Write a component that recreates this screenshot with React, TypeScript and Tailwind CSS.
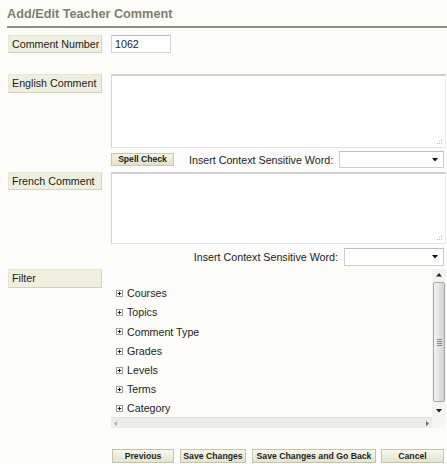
import React from "react";

function Label({ text, h = 18 }: { text: string; h?: number }) {
  return (
    <div className="w-[111px] shrink-0 pl-[8px]">
      <div
        className={`w-[94px] ${h === 19 ? "h-[19px]" : "h-[18px]"} bg-[#efefdf] border border-[#e6e6d4] border-b-[#d2d2bc] border-r-[#d6d6c0] flex items-center pl-[3px] text-[10.7px] leading-none text-[#1c1c1c]`}
      >
        {text}
      </div>
    </div>
  );
}

function Grip() {
  return (
    <svg width="6" height="6" viewBox="0 0 6 6" className="absolute right-[2px] bottom-[2px]">
      <rect x="4" y="0" width="1" height="1" fill="#b5b5b5" />
      <rect x="2" y="2" width="1" height="1" fill="#b5b5b5" />
      <rect x="4" y="2" width="1" height="1" fill="#b5b5b5" />
      <rect x="0" y="4" width="1" height="1" fill="#b5b5b5" />
      <rect x="2" y="4" width="1" height="1" fill="#b5b5b5" />
      <rect x="4" y="4" width="1" height="1" fill="#b5b5b5" />
    </svg>
  );
}

function TextArea({ tall }: { tall: boolean }) {
  return (
    <div
      className={`relative flex-1 mr-[1px] ${tall ? "h-[74px]" : "h-[72px]"} bg-white border-t-2 border-l border-r border-b border-t-[#cfcfcf] border-l-[#d6d6d6] border-r-[#ececec] border-b-[#e6e6e6]`}
    >
      <Grip />
    </div>
  );
}

function Select({ wide }: { wide: boolean }) {
  return (
    <div
      className={`${wide ? "w-[105px] h-[17px]" : "w-[100px] h-[18px]"} mr-[3px] bg-white border border-[#cdcdcd] border-t-[#bdbdbd] flex items-center justify-end pr-[5px]`}
    >
      <svg width="6" height="4" viewBox="0 0 6 4">
        <path d="M0 0 H6 L3 3.5 Z" fill="#111" />
      </svg>
    </div>
  );
}

function Btn({ text, w }: { text: string; w: string }) {
  return (
    <div
      className={`${w} h-[14px] flex items-center justify-center bg-gradient-to-b from-[#f7f7ee] to-[#e3e3cf] border border-[#c4c4ad] text-[8.7px] font-bold text-[#1e1e1e] leading-none`}
    >
      {text}
    </div>
  );
}

function Plus() {
  return (
    <svg width="7" height="7" viewBox="0 0 7 7" className="shrink-0">
      <rect x="0.5" y="0.5" width="6" height="6" fill="#fff" stroke="#9c9c9c" />
      <path d="M1.8 3.5 H5.2 M3.5 1.8 V5.2" stroke="#1a1a1a" strokeWidth="1" />
    </svg>
  );
}

export default function App() {
  const items = ["Courses", "Topics", "Comment Type", "Grades", "Levels", "Terms", "Category"];
  return (
    <div className="w-[447px] h-[464px] overflow-hidden bg-[#fcfcfa] font-['Liberation_Sans',Arial,sans-serif] text-[#1c1c1c]">
      <div className="pl-[7px] pt-[7px] h-[26px] text-[12.7px] leading-[15px] font-bold text-[#7e7f6a]">
        Add/Edit Teacher Comment
      </div>
      <div className="ml-[7px] h-[2px] bg-[#8b8e78]" />

      {/* Comment number */}
      <div className="flex mt-[7px] h-[18px]">
        <Label text="Comment Number" />
        <div className="w-[60px] h-[18px] bg-white border border-[#d4d4d4] border-t-[#bcbcbc] flex items-center pl-[3px] text-[10.7px] leading-none">
          1062
        </div>
      </div>

      {/* English */}
      <div className="flex mt-[21px]">
        <Label text="English Comment" h={19} />
        <TextArea tall />
      </div>

      <div className="flex mt-[3px] h-[17px] items-center">
        <div className="w-[111px] shrink-0" />
        <div className="w-[63px] h-[13px] flex items-center justify-center bg-gradient-to-b from-[#f3f3e4] to-[#e2e2c9] border border-[#c8c8b0] text-[8.6px] font-bold leading-none">
          Spell Check
        </div>
        <div className="ml-[15px] text-[10.7px] leading-none pt-[2px]">Insert Context Sensitive Word:</div>
        <div className="ml-auto">
          <Select wide />
        </div>
      </div>

      {/* French */}
      <div className="flex mt-[4px]">
        <Label text="French Comment" />
        <TextArea tall={false} />
      </div>

      <div className="flex mt-[3px] h-[19px] items-center justify-end">
        <div className="text-[10.7px] leading-none pt-[1px] mr-[6px]">Insert Context Sensitive Word:</div>
        <Select wide={false} />
      </div>

      {/* Filter */}
      <div className="flex mt-[3px]">
        <Label text="Filter" h={19} />
        <div className="flex-1 mr-[1px] h-[159px] flex flex-col bg-[#fcfcf9]">
          <div className="flex flex-1 min-h-0">
            <div className="flex-1 pt-[15px]">
              {items.map((it) => (
                <div key={it} className="flex items-center h-[19.2px] pl-[5px] text-[10.7px] leading-none">
                  <Plus />
                  <span className="ml-[4px]">{it}</span>
                </div>
              ))}
            </div>
            <div className="w-[14px] flex flex-col items-center bg-[#f3f3f1] pt-[4px] pb-[4px]">
              <svg width="6" height="4" viewBox="0 0 6 4" className="shrink-0">
                <path d="M0 3.5 H6 L3 0 Z" fill="#222" />
              </svg>
              <div className="mt-[5px] w-[12px] h-[120px] rounded-[2px] border border-[#a9a9a9] bg-gradient-to-r from-[#f2f2f2] via-[#e4e4e4] to-[#d2d2d2] flex flex-col items-center justify-center gap-[1px]">
                <div className="w-[5px] h-[1px] bg-[#8a8a8a]" />
                <div className="w-[5px] h-[1px] bg-[#8a8a8a]" />
                <div className="w-[5px] h-[1px] bg-[#8a8a8a]" />
                <div className="w-[5px] h-[1px] bg-[#8a8a8a]" />
              </div>
              <div className="flex-1" />
              <svg width="6" height="4" viewBox="0 0 6 4" className="shrink-0">
                <path d="M0 0 H6 L3 3.5 Z" fill="#222" />
              </svg>
            </div>
          </div>
          <div className="flex h-[11px]">
            <div className="flex-1 flex items-center justify-between px-[3px] bg-[#ececea] border-t border-[#e2e2e0]">
              <svg width="3" height="5" viewBox="0 0 3 5">
                <path d="M3 0 V5 L0 2.5 Z" fill="#b0b0b0" />
              </svg>
              <svg width="3" height="5" viewBox="0 0 3 5">
                <path d="M0 0 V5 L3 2.5 Z" fill="#6a6a6a" />
              </svg>
            </div>
            <div className="w-[14px] bg-[#f6f6f4]" />
          </div>
        </div>
      </div>

      {/* Buttons */}
      <div className="flex mt-[21px] pl-[112px]">
        <Btn text="Previous" w="w-[62px]" />
        <div className="ml-[6px]">
          <Btn text="Save Changes" w="w-[66px]" />
        </div>
        <div className="ml-[6px]">
          <Btn text="Save Changes and Go Back" w="w-[124px]" />
        </div>
        <div className="ml-[5px]">
          <Btn text="Cancel" w="w-[63px]" />
        </div>
      </div>
    </div>
  );
}
